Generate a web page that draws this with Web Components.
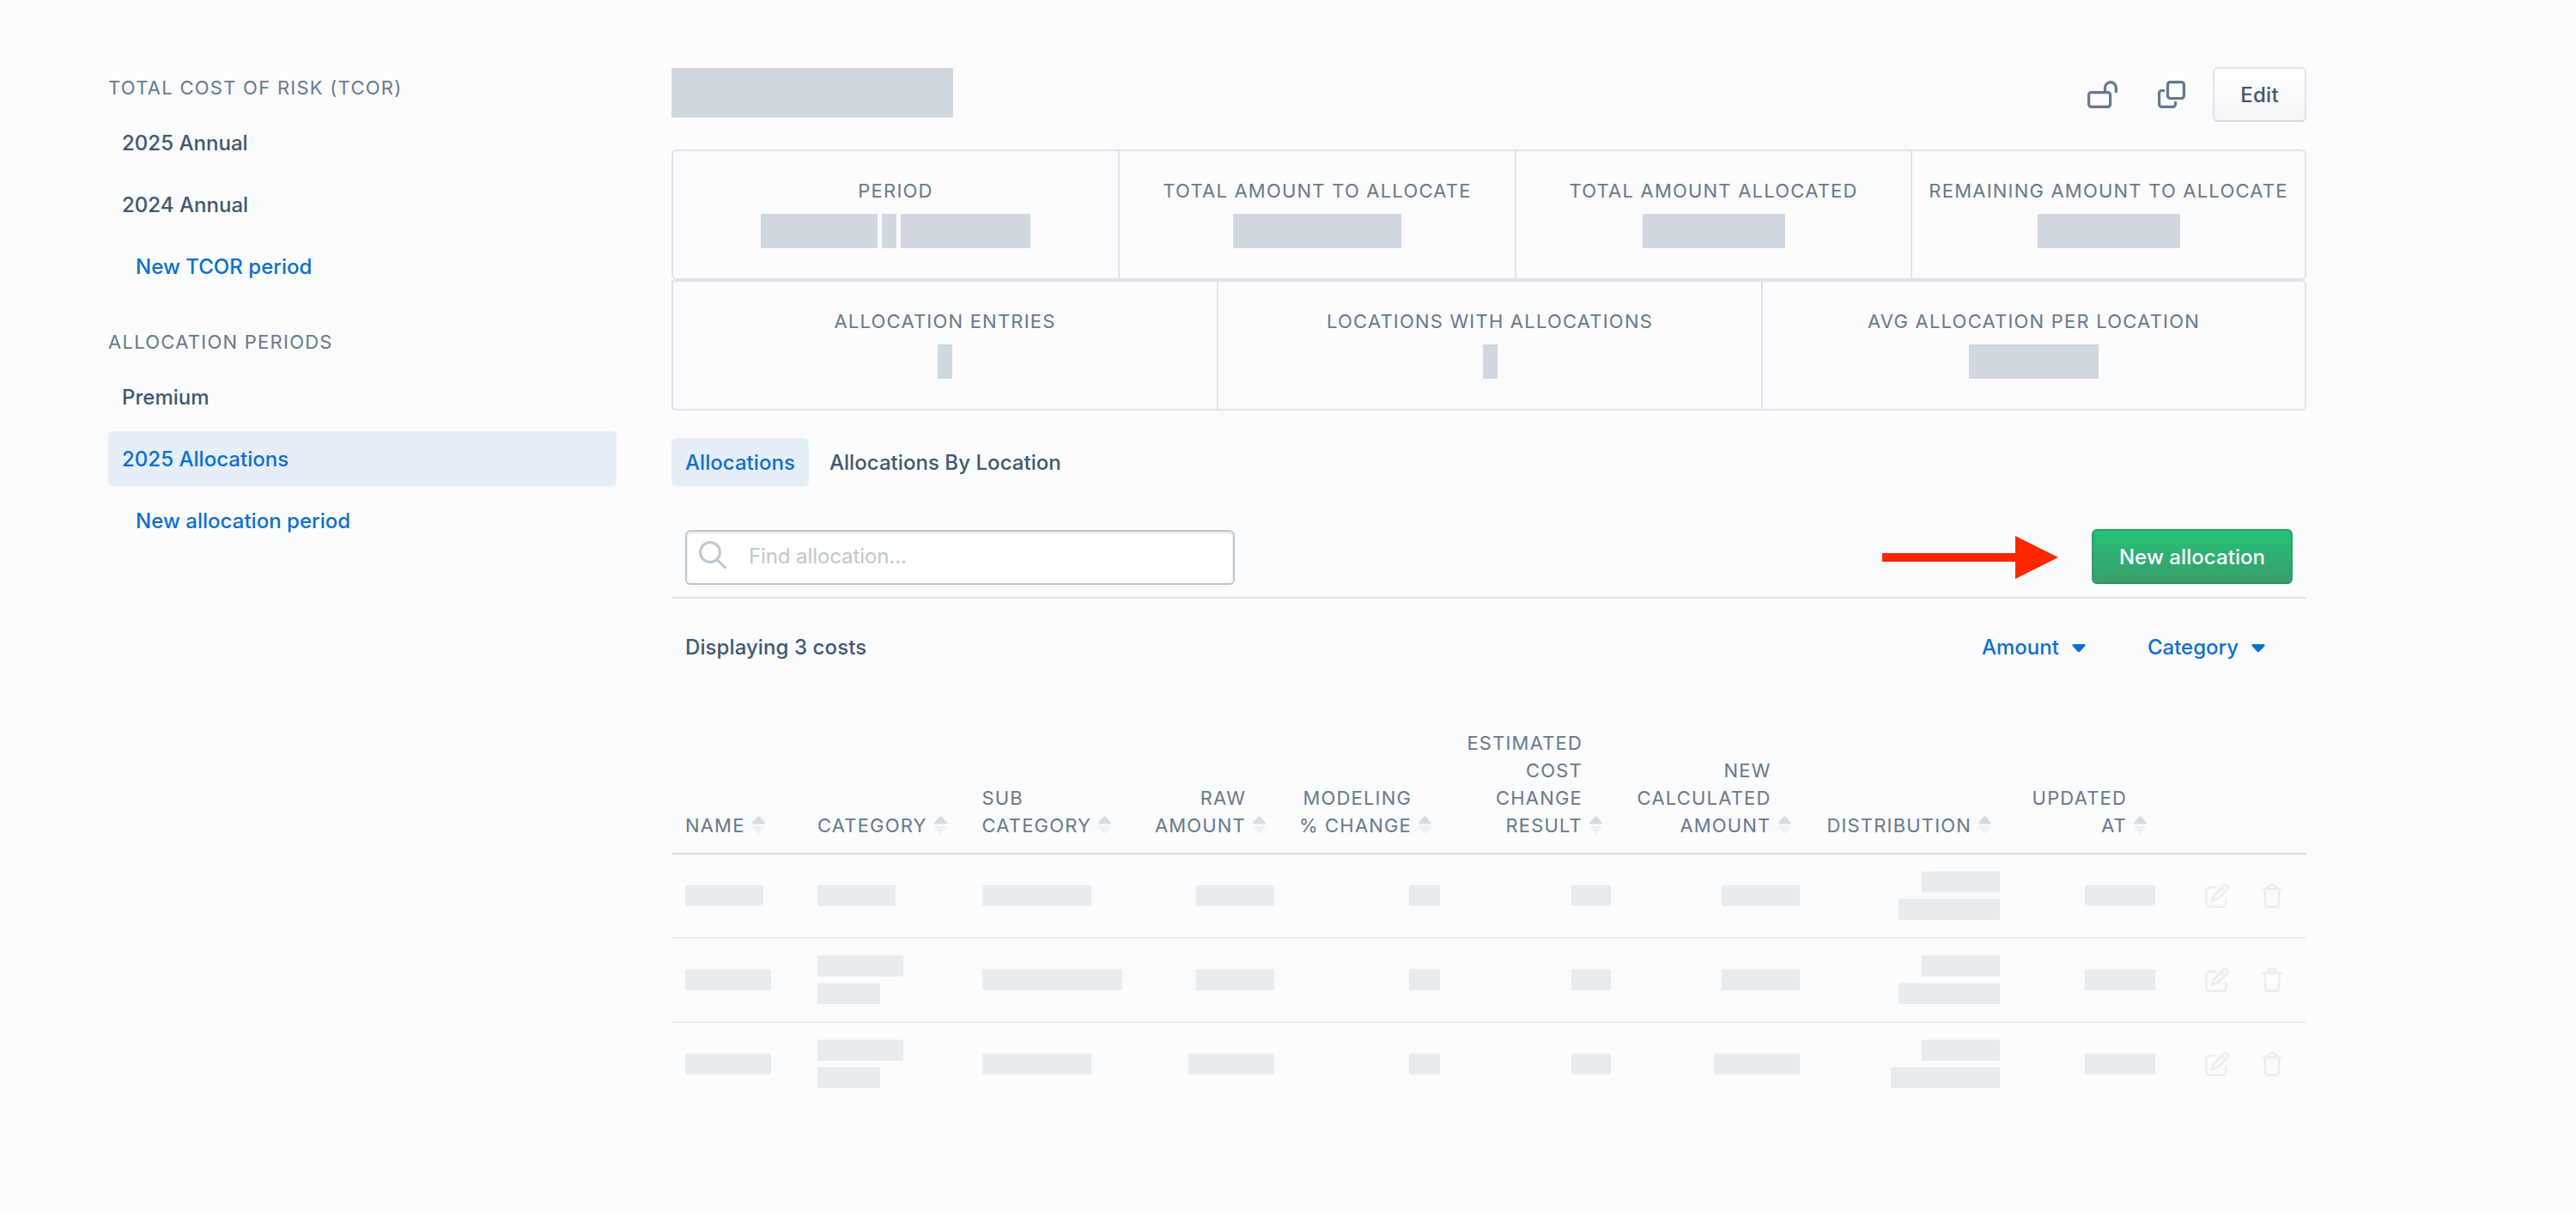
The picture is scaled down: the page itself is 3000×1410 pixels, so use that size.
<!DOCTYPE html>
<html lang="en">
<head>
<meta charset="utf-8">
<title>Allocations</title>
<style>
html,body{margin:0;height:100%}
body{background:#fbfcfe;font-family:Inter,"Liberation Sans",sans-serif;font-size:24px;color:#3e5770;
--ink:#3e5770;--muted:#66788d;--blue:#0c6fcf;--tint:#e6eef8;--line:#e0e2e5;--block:#d0d7df;--soft:#e8ecef}
</style>
</head>
<body>
<app-shell>
  <nav slot="side">
    <nav-group heading="TOTAL COST OF RISK (TCOR)">
      <nav-item>2025 Annual</nav-item>
      <nav-item>2024 Annual</nav-item>
      <nav-item create>New TCOR period</nav-item>
    </nav-group>
    <nav-group heading="ALLOCATION PERIODS">
      <nav-item>Premium</nav-item>
      <nav-item active>2025 Allocations</nav-item>
      <nav-item create>New allocation period</nav-item>
    </nav-group>
  </nav>
  <page-header></page-header>
  <stat-row>
    <stat-cell label="PERIOD" bars="136,16.5,151.5" style="width:518px"></stat-cell>
    <stat-cell label="TOTAL AMOUNT TO ALLOCATE" bars="196" style="width:460px"></stat-cell>
    <stat-cell label="TOTAL AMOUNT ALLOCATED" bars="166" style="width:459px"></stat-cell>
    <stat-cell label="REMAINING AMOUNT TO ALLOCATE" bars="166" style="width:457px"></stat-cell>
  </stat-row>
  <stat-row class="second">
    <stat-cell label="ALLOCATION ENTRIES" bars="17" style="width:633px"></stat-cell>
    <stat-cell label="LOCATIONS WITH ALLOCATIONS" bars="17" style="width:632px"></stat-cell>
    <stat-cell label="AVG ALLOCATION PER LOCATION" bars="151" style="width:631px"></stat-cell>
  </stat-row>
  <tab-bar>
    <tab-item active>Allocations</tab-item>
    <tab-item>Allocations By Location</tab-item>
  </tab-bar>
  <search-bar></search-bar>
  <filter-bar>Displaying 3 costs</filter-bar>
  <cost-table></cost-table>
</app-shell>
<script>
const define = (name, html, setup) => {
  const template = document.createElement('template');
  template.innerHTML = html;
  customElements.define(name, class extends HTMLElement {
    constructor() {
      super();
      this.attachShadow({mode: 'open'}).append(template.content.cloneNode(true));
    }
    connectedCallback() { if (setup) setup(this, this.shadowRoot); }
  });
};

define('app-shell', `<style>
:host{display:flex;align-items:flex-start;gap:64px;padding:78px 314px 0 126px;box-sizing:border-box;width:3000px;height:1410px}
aside{width:592px;padding-top:8px;flex:none}
main{width:1904px;flex:none;display:flex;flex-direction:column}
</style><aside><slot name="side"></slot></aside><main><slot></slot></main>`);

define('nav-group', `<style>
:host{display:block;margin-bottom:40px}
h2{margin:0 0 16px;font-size:22px;line-height:32px;font-weight:400;letter-spacing:1.26px;color:var(--muted)}
div{display:flex;flex-direction:column;gap:8px}
</style><h2></h2><div><slot></slot></div>`, (el, root) => {
  root.querySelector('h2').textContent = el.getAttribute('heading');
});

define('nav-item', `<style>
:host{display:block;box-sizing:border-box;height:64px;line-height:62px;padding:2px 16px 0;border-radius:6px;font-weight:500;letter-spacing:.03px}
:host([active]){background:var(--tint);color:var(--blue)}
:host([create]){padding-left:32px;color:var(--blue)}
</style><slot></slot>`);

define('page-header', `<style>
:host{display:flex;height:64px;justify-content:space-between;margin-bottom:32px}
.title{width:328px;height:58px;margin-top:1px;background:var(--block)}
.tools{display:flex;align-items:center}
svg{display:block;fill:none;stroke:#66788d;stroke-width:3.200;stroke-linecap:butt;stroke-linejoin:round}
.copy{margin:0 32px 0 47px}
button{box-sizing:border-box;width:109px;height:64px;padding:0;border:2px solid #e0e3e7;border-bottom-color:#d3d9df;border-radius:6px;background:linear-gradient(#fff,#f3f5f7);font:500 24px Inter,sans-serif;letter-spacing:.3px;color:var(--ink)}
</style>
<div class="title"></div>
<div class="tools">
<svg width="35" height="32" viewBox="0 0 35 32"><rect x="1.600" y="13.600" width="25" height="16.800" rx="3"/><path d="M20.500 13.500V8.500a6.450 6.900 0 0 1 12.900 0V14"/></svg>
<svg class="copy" width="32" height="32" viewBox="0 0 32 32"><rect x="11.500" y="1.600" width="18.900" height="18.900" rx="3"/><path d="M8 11.500H4.600a3 3 0 0 0-3 3V27.400a3 3 0 0 0 3 3H17.500a3 3 0 0 0 3-3V24"/></svg>
<button>Edit</button>
</div>`);

define('stat-row', `<style>
:host{display:flex;height:152px;box-sizing:border-box;border:2px solid var(--line);border-radius:6px}
:host(.second){position:relative;margin-bottom:32px}
:host(.second)::before{content:"";position:absolute;left:-2px;top:-2px;bottom:-2px;width:2px;background:var(--line)}
</style><slot></slot>`);

define('stat-cell', `<style>
:host{display:flex;flex-direction:column;align-items:center;padding-top:30px;gap:11px;border-right:2px solid var(--line)}
:host(:last-child){border-right:0}
.label{font-size:22px;line-height:32px;letter-spacing:1.21px;color:var(--muted);white-space:nowrap}
.bars{display:flex;gap:5px}
i{height:40px;background:var(--block)}
</style><div class="label"></div><div class="bars"></div>`, (el, root) => {
  root.querySelector('.label').textContent = el.getAttribute('label');
  root.querySelector('.bars').innerHTML = el.getAttribute('bars').split(',').map(w => `<i style="width:${w}px"></i>`).join('');
});

define('tab-bar', `<style>:host{display:flex;gap:8px;height:56px;margin-bottom:50px}</style><slot></slot>`);
define('tab-item', `<style>
:host{display:block;box-sizing:border-box;height:56px;line-height:54px;padding:2px 16px 0;border-radius:6px;font-weight:500;letter-spacing:.05px}
:host([active]){background:var(--tint);color:var(--blue)}
</style><slot></slot>`);

define('search-bar', `<style>
:host{display:flex;justify-content:space-between;align-items:flex-start;padding:0 16px 14px;border-bottom:2px solid var(--line)}
.field{box-sizing:border-box;width:640px;height:64px;margin-top:1px;border:2px solid #bfc6cc;border-radius:6px;background:#fff;box-shadow:inset 0 2px 3px #dfe3e7;display:flex;align-items:flex-start;padding:11px 14px;gap:26px}
.field svg{fill:none;stroke:#bfc6cc;stroke-width:3;stroke-linecap:round}
.field span{line-height:36px;color:#bfc6cc;letter-spacing:-.1px}
.actions{display:flex;gap:39px;align-items:center}
.arrow{margin-top:2px;fill:#ff2600}
button{box-sizing:border-box;width:234px;height:64px;padding:0;border:2px solid #2f9d6d;border-bottom-color:#398a69;border-radius:6px;background:linear-gradient(#25c277,#3a9d6d);font:500 24px Inter,sans-serif;letter-spacing:.07px;color:#fff}
</style>
<div class="field"><svg width="32" height="32" viewBox="0 0 32 32"><circle cx="13" cy="13" r="11.500"/><path d="M21.500 22L30.500 31"/></svg><span>Find allocation…</span></div>
<div class="actions"><svg class="arrow" width="205" height="50" viewBox="0 0 205 50"><path d="M0 20H155V0L205 25L155 50V30H0Z"/></svg><button>New allocation</button></div>`);

define('filter-bar', `<style>
:host{display:flex;justify-content:space-between;align-items:center;height:112px;margin-bottom:24px;padding:0 48px 0 16px;font-weight:500;letter-spacing:.09px}
.menus{display:flex;gap:72px;color:var(--blue);letter-spacing:0}
.menus span{display:flex;align-items:center;gap:15px}
svg{fill:currentColor;margin-top:3px}
</style><slot></slot><div class="menus">
<span>Amount <svg width="16" height="10" viewBox="0 0 16 10"><path d="M1.500 0H14.500Q16.500 .5 15 2.500L9.500 8.500Q8 10 6.500 8.500L1 2.500Q-.5 .5 1.500 0Z"/></svg></span>
<span>Category <svg width="16" height="10" viewBox="0 0 16 10"><path d="M1.500 0H14.500Q16.500 .5 15 2.500L9.500 8.500Q8 10 6.500 8.500L1 2.500Q-.5 .5 1.500 0Z"/></svg></span></div>`);

define('sort-icon', `<style>:host{display:block;width:15px;height:21px}svg{display:block}</style>
<svg width="15" height="21" viewBox="0 0 15 21"><path fill="#d6dbe1" d="M6.500 .7Q7.500-.3 8.500 .7L14.600 7.500Q15.200 9.500 13.500 9.500H1.500Q-.2 9.500 .4 7.500Z"/><path fill="#eff2f4" d="M6.500 20.300Q7.500 21.300 8.500 20.300L14.600 13.800Q15.200 12 13.500 12H1.500Q-.2 12 .4 13.800Z"/></svg>`);

define('header-cell', `<style>
:host{display:flex;align-items:flex-end;gap:8px;padding:16px 16px 16px;font-size:22px;line-height:32px;letter-spacing:1.18px;color:var(--muted);white-space:nowrap}
:host([end]){justify-content:flex-end;text-align:right;padding-right:26px}
sort-icon{margin-bottom:6px}
</style><div><slot></slot></div><sort-icon></sort-icon>`);

define('text-block', `<style>
:host{display:flex;flex-direction:column;gap:7px;padding:0 16px}
:host([end]){align-items:flex-end}
i{height:25px;background:linear-gradient(#f2f5f7 1px,var(--soft) 1px)}
</style>`, (el, root) => {
  el.getAttribute('bars').split(',').forEach(w => {
    const bar = document.createElement('i');
    bar.style.width = w + 'px';
    root.append(bar);
  });
});

define('row-actions', `<style>
:host{display:flex;padding-left:42px;gap:38px}
svg{fill:none;stroke:#ebedef;stroke-width:2.700;stroke-linecap:round;stroke-linejoin:round}
</style>
<svg width="28" height="28" viewBox="0 0 28 28"><path d="M11.500 4.200H5.200a4 4 0 0 0-4 4V22.800a4 4 0 0 0 4 4H20.400a4 4 0 0 0 4-4V16.800"/><path d="M8.300 19.800L9.900 13.900L21.300 2.300a3 3 0 0 1 4.300 4.300L14.200 18.100ZM19 4.800l4.200 4.200"/></svg>
<svg width="24" height="28" viewBox="0 0 24 28"><path d="M1.200 5.800H22.800M6.500 5.500L9 2Q9.600 1.200 10.500 1.200H13.500Q14.400 1.200 15 2L17.500 5.500M3.300 6L4.500 24Q4.700 26.800 7.300 26.800H16.700Q19.300 26.800 19.500 24L20.700 6"/></svg>`);

define('cost-table', `<style>
:host{display:block}
.row{display:grid;grid-template-columns:154px 191.500px 198.500px 174px 193px 199px 219.500px 233.500px 181px 160px}
.head{border-bottom:2px solid #d9dbdf}
.body{height:96px;padding-bottom:1px;box-sizing:border-box;align-items:center}
.body:not(:last-child){border-bottom:2px solid #ebedf0;height:98px}
</style>
<div class="row head">
<header-cell>NAME</header-cell><header-cell>CATEGORY</header-cell><header-cell>SUB<br>CATEGORY</header-cell>
<header-cell end>RAW<br>AMOUNT</header-cell><header-cell end>MODELING<br>% CHANGE</header-cell>
<header-cell end>ESTIMATED<br>COST<br>CHANGE<br>RESULT</header-cell><header-cell end>NEW<br>CALCULATED<br>AMOUNT</header-cell>
<header-cell end>DISTRIBUTION</header-cell><header-cell end>UPDATED<br>AT</header-cell><div></div>
</div>`, (el, root) => {
  const rows = [
    ['91', '91', '127', '91', '36.5', '46', '91', '91,118', '82'],
    ['100', '100,73', '163', '91', '36.5', '46', '91', '91,118', '82'],
    ['100', '100,73', '127', '100', '36.5', '46', '100', '91,127', '82'],
  ];
  for (const cells of rows) {
    const row = document.createElement('div');
    row.className = 'row body';
    row.innerHTML = cells.map((b, i) => `<text-block bars="${b}"${i > 2 ? ' end' : ''}></text-block>`).join('') + '<row-actions></row-actions>';
    root.append(row);
  }
});
</script>
</body>
</html>
